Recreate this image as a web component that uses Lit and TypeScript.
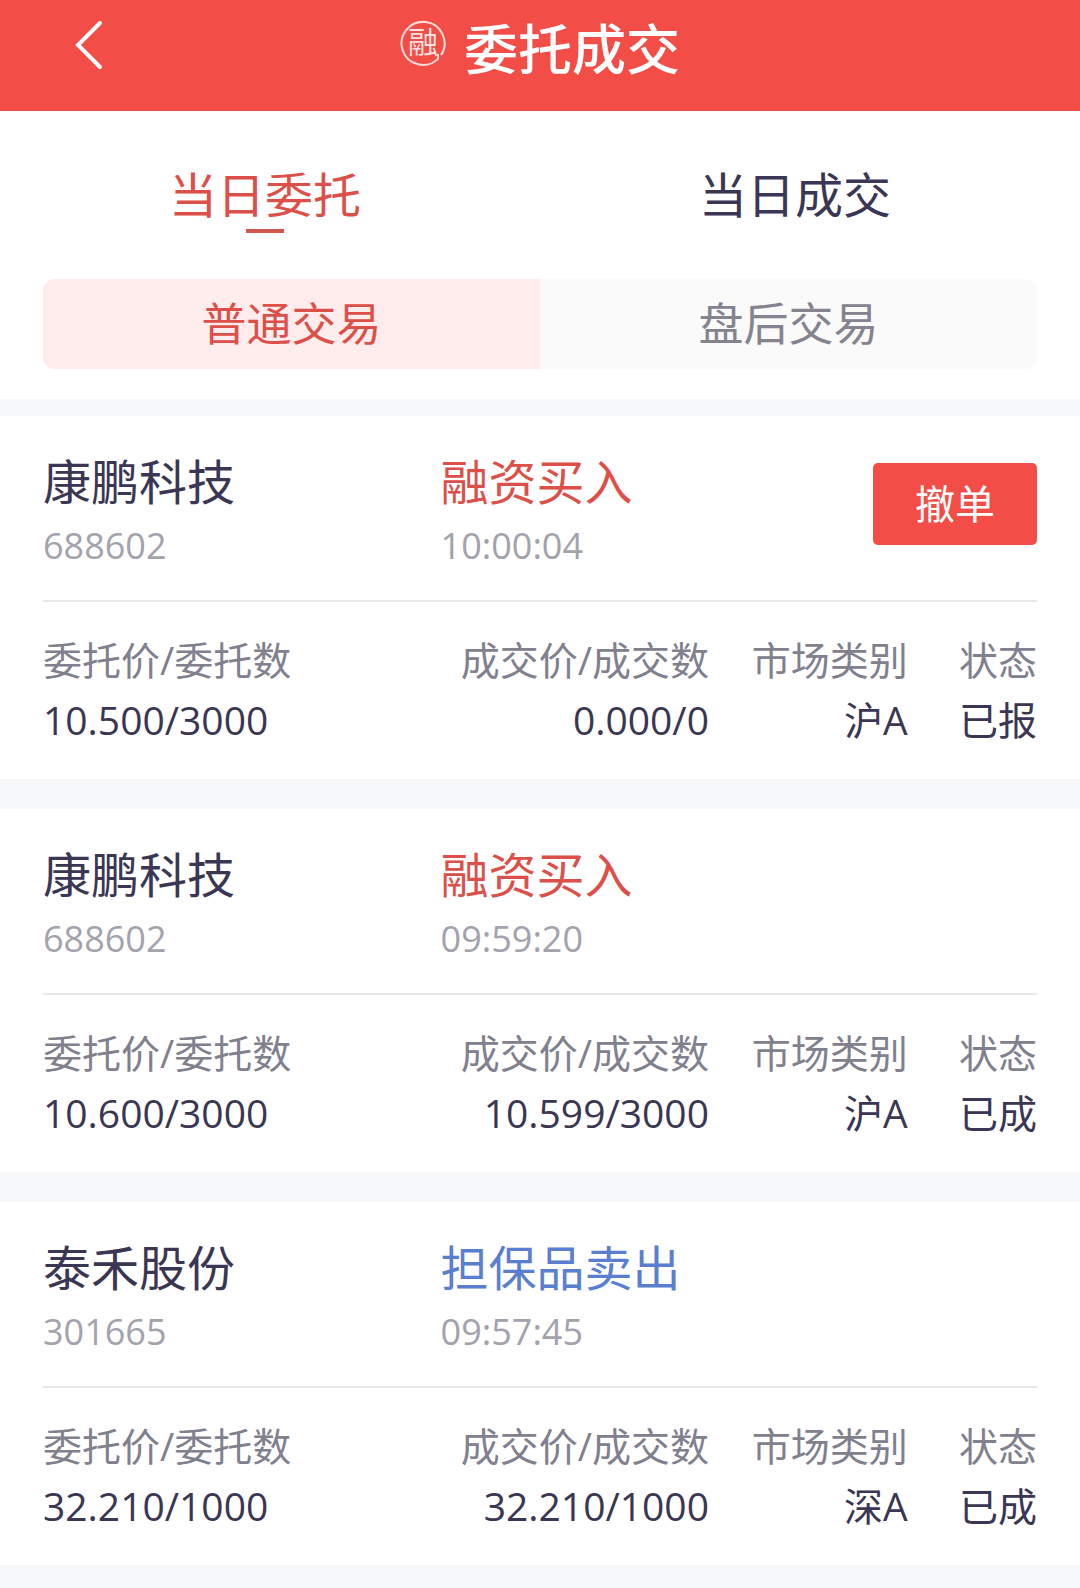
import { LitElement, html, css, nothing } from "lit";
import { customElement, property, state } from "lit/decorators.js";
import { classMap } from "lit/directives/class-map.js";

interface Order {
  name: string;
  code: string;
  action: string;
  side: "buy" | "sell";
  time: string;
  order: string;
  deal: string;
  market: string;
  status: string;
  cancellable: boolean;
}

const ORDERS: Order[] = [
  {
    name: "康鹏科技", code: "688602", action: "融资买入", side: "buy", time: "10:00:04",
    order: "10.500/3000", deal: "0.000/0", market: "沪A", status: "已报", cancellable: true,
  },
  {
    name: "康鹏科技", code: "688602", action: "融资买入", side: "buy", time: "09:59:20",
    order: "10.600/3000", deal: "10.599/3000", market: "沪A", status: "已成", cancellable: false,
  },
  {
    name: "泰禾股份", code: "301665", action: "担保品卖出", side: "sell", time: "09:57:45",
    order: "32.210/1000", deal: "32.210/1000", market: "深A", status: "已成", cancellable: false,
  },
];

const base = css`
  * {
    box-sizing: border-box;
  }
  button {
    margin: 0;
    padding: 0;
    border: 0;
    background: none;
    color: inherit;
    font: inherit;
    cursor: pointer;
  }
`;

@customElement("order-card")
export class OrderCard extends LitElement {
  @property({ attribute: false }) order!: Order;

  static styles = [
    base,
    css`
      :host {
        display: block;
        padding: 0 43px 29px;
        background: #fff;
      }
      .summary {
        display: grid;
        grid-template-columns: 40% 1fr auto;
        align-items: center;
        padding: 34px 0 22px;
        border-bottom: 2px solid #e8e8ea;
      }
      .title,
      .sub {
        margin: 0;
        line-height: 64px;
        white-space: nowrap;
      }
      .title {
        font-size: 48px;
        font-weight: 400;
      }
      .sub {
        font-size: 36px;
        color: #a3a2ad;
      }
      .buy {
        color: #dc5049;
      }
      .sell {
        color: #5a7fd0;
      }
      .cancel {
        margin-bottom: 20px;
        padding: 0 42px;
        border-radius: 5px;
        background: #f24d46;
        color: #fff;
        font-size: 40px;
        line-height: 82px;
      }
      .details {
        width: 100%;
        margin-top: 28px;
        table-layout: fixed;
        border-collapse: collapse;
        font-size: 39px;
        line-height: 60px;
        text-align: right;
        white-space: nowrap;
      }
      .details th,
      .details td {
        padding: 0;
        font-weight: 400;
      }
      .details th {
        color: #81808f;
      }
      .price {
        width: 40%;
        text-align: left;
      }
      .deal {
        width: 27%;
      }
      .market {
        width: 20%;
      }
      .status {
        width: 13%;
      }
    `,
  ];

  render() {
    const o = this.order;
    return html`
      <div class="summary">
        <div>
          <h2 class="title">${o.name}</h2>
          <p class="sub">${o.code}</p>
        </div>
        <div>
          <p class="title ${o.side}">${o.action}</p>
          <p class="sub">${o.time}</p>
        </div>
        ${o.cancellable ? html`<button class="cancel" type="button">撤单</button>` : nothing}
      </div>
      <table class="details">
        <thead>
          <tr>
            <th class="price" scope="col">委托价/委托数</th>
            <th class="deal" scope="col">成交价/成交数</th>
            <th class="market" scope="col">市场类别</th>
            <th class="status" scope="col">状态</th>
          </tr>
        </thead>
        <tbody>
          <tr>
            <td class="price">${o.order}</td>
            <td>${o.deal}</td>
            <td>${o.market}</td>
            <td>${o.status}</td>
          </tr>
        </tbody>
      </table>
    `;
  }
}

@customElement("app-root")
export class AppRoot extends LitElement {
  @state() private tab = 0;
  @state() private session = 0;

  static styles = [
    base,
    css`
      :host {
        display: block;
        min-height: 100vh;
        background: #f6f8fa;
        color: #3b3653;
        font-family: "Open Sans", "Noto Sans CJK SC", sans-serif;
      }
      .bar {
        display: grid;
        grid-template-columns: 1fr auto 1fr;
        align-items: center;
        padding: 2px 0 19px 64px;
        background: #f24d46;
        color: #fff;
      }
      .brand {
        grid-column: 2;
        display: flex;
        align-items: center;
        gap: 18px;
        margin-right: 64px;
      }
      .back {
        width: 48px;
        height: 90px;
      }
      .back svg,
      .seal {
        display: block;
      }
      .seal-text {
        font-family: "Noto Sans CJK SC", sans-serif;
        font-size: 30px;
        font-weight: 400;
      }
      .heading {
        margin: 0;
        font-family: "Noto Sans CJK SC", sans-serif;
        font-size: 54px;
        font-weight: 500;
        line-height: 90px;
      }
      .filters {
        padding-bottom: 30px;
        background: #fff;
      }
      .tabs {
        display: grid;
        grid-template-columns: 1fr 1fr;
        padding: 50px 20px 46px 0;
      }
      .tab {
        display: flex;
        flex-direction: column;
        align-items: center;
        font-size: 48px;
        line-height: 68px;
      }
      .tab::after {
        content: "";
        width: 38px;
        height: 4px;
      }
      .tab.on {
        color: #dc5049;
      }
      .tab.on::after {
        background: #d2574f;
      }
      .segments {
        display: grid;
        grid-template-columns: 1fr 1fr;
        margin: 0 43px;
        border-radius: 12px;
        overflow: hidden;
        background: #fafafa;
      }
      .segment {
        color: #84838f;
        font-size: 45px;
        line-height: 90px;
      }
      .segment.on {
        background: #ffecec;
        color: #dc5049;
      }
      .orders {
        display: grid;
        gap: 30px;
        padding: 17px 0 23px;
      }
    `,
  ];

  render() {
    return html`
      <header class="bar">
        <button class="back" type="button" aria-label="返回">
          <svg width="48" height="90" viewBox="0 0 48 90" fill="none" stroke="#fff" stroke-width="4" aria-hidden="true">
            <path d="M36 21 L14 43 L36 65" stroke-linecap="round" stroke-linejoin="miter" />
          </svg>
        </button>
        <div class="brand">
          <svg class="seal" width="46" height="64" viewBox="0 0 46 64" aria-hidden="true">
            <path
              d="M38 39 V43.9 A21.5 21.5 0 1 1 41 40.3"
              fill="none" stroke="#fff" stroke-opacity="0.8" stroke-width="2"
            />
            <text class="seal-text" x="23" y="38" text-anchor="middle" fill="#fff" fill-opacity="0.85">融</text>
          </svg>
          <h1 class="heading">委托成交</h1>
        </div>
      </header>
      <div class="filters">
        <nav class="tabs">
          ${["当日委托", "当日成交"].map(
            (label, i) => html`<button
              type="button"
              class=${classMap({ tab: true, on: this.tab === i })}
              aria-pressed=${this.tab === i}
              @click=${() => (this.tab = i)}
            >${label}</button>`
          )}
        </nav>
        <div class="segments">
          ${["普通交易", "盘后交易"].map(
            (label, i) => html`<button
              type="button"
              class=${classMap({ segment: true, on: this.session === i })}
              aria-pressed=${this.session === i}
              @click=${() => (this.session = i)}
            >${label}</button>`
          )}
        </div>
      </div>
      <main class="orders">
        ${ORDERS.map((o) => html`<order-card .order=${o}></order-card>`)}
      </main>
    `;
  }
}
